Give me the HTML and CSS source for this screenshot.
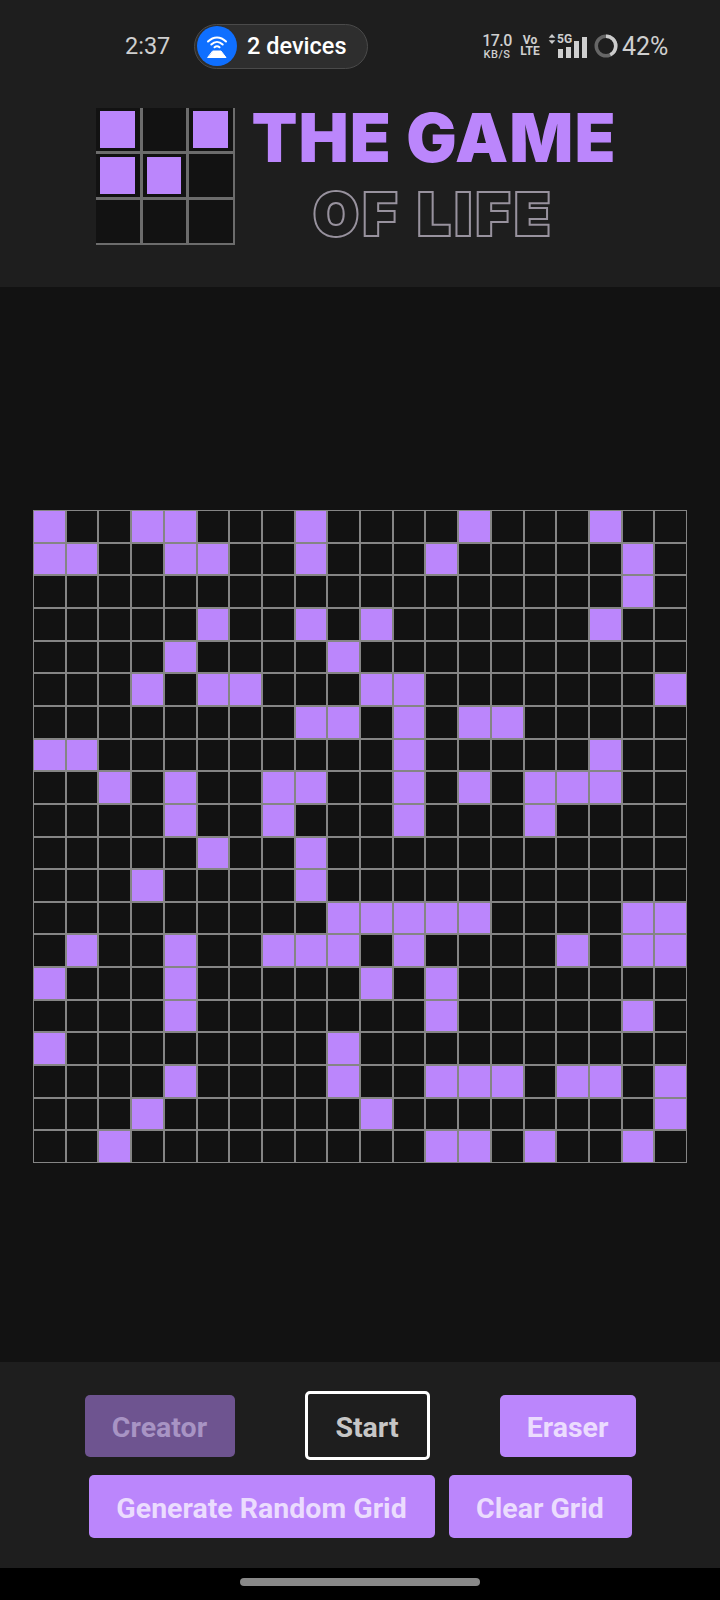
FILE: index.html
```html
<!DOCTYPE html>
<html>
<head>
    <title>The Game of Life</title>
    <link rel="stylesheet" href="styles.css">
</head>
<body>
    <div id="header">
        <div id="statusbar">
            <span class="time">2:37</span>
            <div class="hotspot">
                <span class="hotspot-icon">
                    <svg width="26" height="26" viewBox="0 0 26 26" fill="none" stroke="#fff" stroke-linecap="round">
                        <path d="M4 8.5C9.5 3 16.500 3 22 8.500" stroke-width="2"/>
                        <path d="M7.300 11.500C10.800 8 15.200 8 18.700 11.500" stroke-width="2"/>
                        <path d="M10.500 14.300C12 13 14 13 15.500 14.300" stroke-width="2"/>
                        <path d="M9 18H17L22 24.500H4Z" fill="#fff" stroke="#fff" stroke-width="1" stroke-linejoin="round"/>
                    </svg>
                </span>
                <span class="hotspot-text">2 devices</span>
            </div>
            <div class="status-right">
                <div class="speed"><span>17.0</span><small>KB/S</small></div>
                <div class="volte"><span>Vo</span><span>LTE</span></div>
                <div class="signal">
                    <span class="net">5G</span>
                    <svg class="arrows" width="8" height="10" viewBox="0 0 9 12" fill="#ccc"><path d="M4.500 0L8.500 4.500H.5Z"/><path d="M4.500 12L.5 7.500H8.500Z"/></svg>
                    <div class="bars">
                        <i class="b1"></i><i class="b2"></i><i class="b3"></i><i class="b4"></i>
                    </div>
                </div>
                <svg class="battery" width="24" height="24" viewBox="0 0 24 24" fill="none" stroke-width="3.500">
                    <circle cx="12" cy="12" r="9.750" stroke="#666"/>
                    <circle cx="12" cy="12" r="9.750" stroke="#ccc" stroke-dasharray="26 62" transform="rotate(-90 12 12)"/>
                </svg>
                <span class="percent">42%</span>
            </div>
        </div>
        <div id="logo">
            <div class="logo-grid">
                <div class="logo-cell on"></div>
                <div class="logo-cell"></div>
                <div class="logo-cell on"></div>
                <div class="logo-cell on"></div>
                <div class="logo-cell on"></div>
                <div class="logo-cell"></div>
                <div class="logo-cell"></div>
                <div class="logo-cell"></div>
                <div class="logo-cell"></div>
            </div>
            <div class="logo-text">
                <div class="title">THE GAME</div>
                <div class="subtitle">OF LIFE</div>
            </div>
        </div>
    </div>

    <div id="board-container">
        <div id="board"></div>
    </div>

    <div id="controls">
        <div class="button-row first">
            <button class="btn creator">Creator</button>
            <button class="btn start">Start</button>
            <button class="btn eraser">Eraser</button>
        </div>
        <div class="button-row second">
            <button class="btn generate">Generate Random Grid</button>
            <button class="btn clear">Clear Grid</button>
        </div>
    </div>

    <div id="navbar"><div class="home-pill"></div></div>

    <script src="script.js"></script>
</body>
</html>
```

FILE: styles.css
```css
body {
    margin: 0;
    width: 720px;
    height: 1600px;
    display: flex;
    flex-direction: column;
    background-color: #121212;
    font-family: Roboto, "Liberation Sans", sans-serif;
}

#header {
    height: 287px;
    background-color: #1e1e1e;
}

#statusbar {
    height: 92px;
    display: flex;
    align-items: center;
    padding-left: 125px;
    color: #cfcfcf;
}

.time {
    width: 69px;
    font-size: 23.500px;
}

.hotspot {
    width: 174px;
    height: 45px;
    box-sizing: border-box;
    display: flex;
    align-items: center;
    padding-left: 2px;
    border: 1px solid #4a4a4a;
    border-radius: 23px;
    background-color: #2e2e2e;
}

.hotspot-icon {
    width: 40px;
    height: 40px;
    display: flex;
    align-items: center;
    justify-content: center;
    border-radius: 50%;
    background-color: #0f6fff;
}

.hotspot-text {
    margin-left: 10px;
    font-size: 23.500px;
    font-weight: 500;
    color: #fff;
}

.status-right {
    display: flex;
    align-items: center;
    margin-left: 114px;
}

.speed {
    width: 30px;
    display: flex;
    flex-direction: column;
    align-items: center;
    font-weight: 500;
    font-size: 16px;
    line-height: 16px;
    letter-spacing: -0.5px;
}

.speed small {
    font-size: 11px;
    line-height: 11px;
    letter-spacing: 0.5px;
}

.volte {
    width: 16px;
    margin-left: 10px;
    display: flex;
    flex-direction: column;
    align-items: center;
    font-size: 12px;
    line-height: 11px;
    font-weight: 700;
}

.signal {
    position: relative;
    width: 39px;
    height: 24px;
    margin-left: 10px;
}

.net {
    position: absolute;
    top: -2px;
    left: 9px;
    font-size: 12px;
    line-height: 14px;
    font-weight: 700;
}

.arrows {
    position: absolute;
    top: 0;
    left: 0;
}

.bars {
    position: absolute;
    right: 0;
    bottom: 0;
    display: flex;
    align-items: flex-end;
    gap: 3px;
}

.bars i {
    width: 5px;
    background-color: #cfcfcf;
}

.bars .b1 { height: 9px; }
.bars .b2 { height: 11px; }
.bars .b3 { height: 17px; }
.bars .b4 { height: 21px; }

.battery {
    margin-left: 7px;
}

.percent {
    margin-left: 4px;
    font-size: 25px;
}

#logo {
    display: flex;
    margin-top: 16px;
    padding-left: 96px;
}

.logo-grid {
    width: 137px;
    height: 135px;
    display: grid;
    grid-template-columns: repeat(3, 1fr);
    grid-template-rows: repeat(3, 1fr);
    gap: 3px;
    background-color: #6c6c6c;
    border-right: 2px solid #6c6c6c;
    border-bottom: 2px solid #6c6c6c;
}

.logo-cell {
    display: flex;
    background-color: #121212;
}

.logo-cell.on::after {
    content: "";
    flex: 1;
    margin: 3px 5px 3px 4px;
    background-color: #bb86fc;
}

.logo-text {
    width: 362px;
    margin-left: 18px;
    display: flex;
    flex-direction: column;
    align-items: center;
}

.title {
    font-family: Inter, Roboto, sans-serif;
    font-size: 67px;
    font-weight: 900;
    line-height: 60px;
    letter-spacing: 1px;
    color: #bb86fc;
    white-space: nowrap;
}

.subtitle {
    margin-top: 19px;
    font-family: Inter, Roboto, sans-serif;
    font-size: 58px;
    font-weight: 900;
    line-height: 54px;
    letter-spacing: 4.500px;
    color: #1e1e1e;
    -webkit-text-stroke: 4px #98929e;
    paint-order: stroke fill;
    white-space: nowrap;
}

#board-container {
    height: 1075px;
    box-sizing: border-box;
    padding-top: 24px;
    display: flex;
    justify-content: center;
    align-items: center;
}

#board {
    width: 654px;
    height: 653px;
    display: grid;
    grid-template-columns: repeat(20, 1fr);
    grid-template-rows: repeat(20, 1fr);
}

.cell {
    box-sizing: border-box;
    border: 1px solid #858585;
    background-color: #121212;
}

.cell.alive {
    background-color: #bb86fc;
}

#controls {
    height: 206px;
    box-sizing: border-box;
    padding-top: 29px;
    background-color: #1e1e1e;
}

.button-row {
    display: flex;
    justify-content: center;
    align-items: center;
}

.button-row.first {
    height: 69px;
    gap: 70px;
}

.button-row.second {
    margin-top: 15px;
    gap: 14px;
}

.btn {
    height: 62px;
    padding: 3px 0 0;
    border: none;
    border-radius: 5px;
    background-color: #bb86fc;
    color: #ebdcfe;
    font-family: Roboto, "Liberation Sans", sans-serif;
    font-size: 28.500px;
    font-weight: 700;
}

.creator {
    width: 150px;
    background-color: #6e5490;
    color: #a894c4;
}

.start {
    width: 125px;
    height: 69px;
    border: 3px solid #fff;
    background-color: #1e1e1e;
    color: #c6c6c6;
}

.eraser {
    width: 136px;
}

.generate {
    width: 346px;
    height: 63px;
}

.clear {
    width: 183px;
    height: 63px;
}

#navbar {
    height: 32px;
    display: flex;
    justify-content: center;
    background-color: #000;
}

.home-pill {
    width: 240px;
    height: 8px;
    margin-top: 10px;
    border-radius: 4px;
    background-color: #888;
}
```

FILE: script.js
```js
// live cells for each row of the board
const rows = [
    [0, 3, 4, 8, 13, 17],
    [0, 1, 4, 5, 8, 12, 18],
    [18],
    [5, 8, 10, 17],
    [4, 9],
    [3, 5, 6, 10, 11, 19],
    [8, 9, 11, 13, 14],
    [0, 1, 11, 17],
    [2, 4, 7, 8, 11, 13, 15, 16, 17],
    [4, 7, 11, 15],
    [5, 8],
    [3, 8],
    [9, 10, 11, 12, 13, 18, 19],
    [1, 4, 7, 8, 9, 11, 16, 18, 19],
    [0, 4, 10, 12],
    [4, 12, 18],
    [0, 9],
    [4, 9, 12, 13, 14, 16, 17, 19],
    [3, 10, 19],
    [2, 12, 13, 15, 18]
];

let board = document.getElementById('board');

rows.forEach(function(row) {
    for (let c = 0; c < 20; c++) {
        let cell = document.createElement('div');
        cell.className = row.includes(c) ? 'cell alive' : 'cell';
        board.appendChild(cell);
    }
});
```
